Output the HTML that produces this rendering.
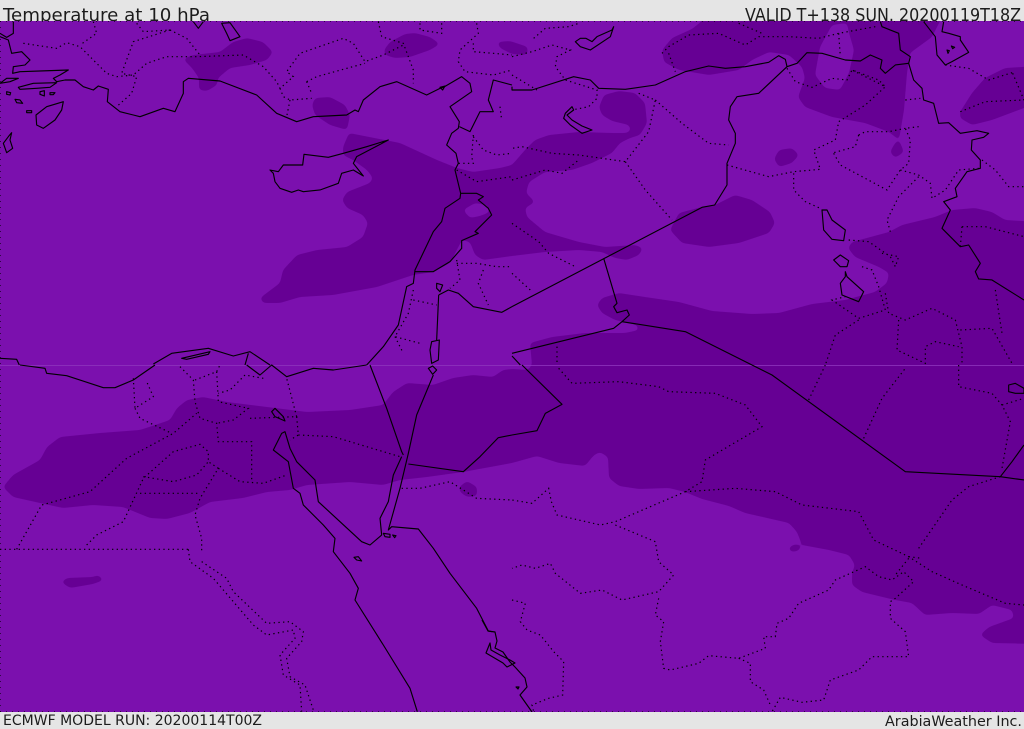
<!DOCTYPE html>
<html><head><meta charset="utf-8"><title>Temperature at 10 hPa</title>
<style>html,body{margin:0;padding:0;background:#e5e5e5}svg{display:block}
text{font-family:"DejaVu Sans","Liberation Sans",sans-serif;fill:#1c1c1c}
.s polyline,.s polygon{fill:none;stroke:#000;stroke-width:3.4;stroke-linejoin:round}
.d polyline{fill:none;stroke:#000;stroke-width:3.6;stroke-dasharray:4 10}
.e polyline{fill:none;stroke:#000;stroke-width:1;stroke-dasharray:1 5;opacity:.6}
.f polygon{fill:#660094}
.l polygon{fill:#7b10ae}
.t polyline,.t polygon{fill:none;stroke:#000;stroke-width:1.15;stroke-linejoin:round}
</style></head><body>
<svg width="1024" height="729" viewBox="0 0 1024 729" xmlns="http://www.w3.org/2000/svg">
<defs>
<filter id="sm" filterUnits="userSpaceOnUse" x="-60" y="-60" width="1150" height="850" color-interpolation-filters="sRGB">
<feGaussianBlur stdDeviation="2.2"/>
<feComponentTransfer><feFuncA type="linear" slope="10" intercept="-4.5"/></feComponentTransfer>
</filter>
</defs>
<rect width="1024" height="729" fill="#e5e5e5"/>
<text x="3" y="21" font-size="17.4" textLength="207" lengthAdjust="spacingAndGlyphs">Temperature at 10 hPa</text>
<text x="745" y="21" font-size="17.4" textLength="276" lengthAdjust="spacingAndGlyphs">VALID T+138 SUN. 20200119T18Z</text>
<text x="3" y="725" font-size="14" textLength="259" lengthAdjust="spacingAndGlyphs">ECMWF MODEL RUN: 20200114T00Z</text>
<text x="885" y="726" font-size="14" textLength="137" lengthAdjust="spacingAndGlyphs">ArabiaWeather Inc.</text>
<svg x="0" y="21" width="1024" height="691" viewBox="0 21 1024 691">
<rect x="0" y="21" width="1024" height="691" fill="#7b10ae"/>
<g class="f" filter="url(#sm)">
<polygon points="183,59 193,55 220,52 233,42 247,38 263,42 273,52 267,60 250,65 230,68 218,78 217,85 207,91 199,90 199,78 192,68"/>
<polygon points="384,50 390,42 405,34 415,33 430,37 440,44 430,50 410,57 395,58 385,55"/>
<polygon points="497,42 510,41 528,47 527,55 512,54 500,48"/>
<polygon points="312,105 315,98 330,97 345,105 350,115 347,130 330,125 315,115"/>
<polygon points="349,133 400,143 437,160 457,168 473,172 500,168 512,165 525,150 535,140 549,135 579,132 612,133 627,133 631,130 629,125 612,121 602,115 599,107 604,95 619,91 635,93 645,103 647,123 640,135 630,138 620,143 612,153 592,163 572,170 545,172 529,182 526,193 535,202 525,208 527,217 545,232 579,242 605,247 635,245 643,248 639,255 627,260 615,258 602,252 579,250 545,252 512,256 483,260 475,255 470,242 462,240 450,263 433,272 413,275 377,287 333,295 300,297 280,303 263,303 260,298 280,283 283,270 297,255 317,250 347,247 363,237 368,223 363,215 347,208 342,200 347,192 370,183 373,178 367,170 353,160 343,155 343,147"/>
<polygon points="704,10 702,21 692,29 672,38 662,50 664,62 679,70 709,75 739,70 752,60 769,52 789,55 802,67 805,78 798,97 805,107 832,117 865,123 889,132 899,140 895,143 890,152 895,158 904,152 899,140 904,110 907,73 910,53 932,37 940,21 945,10"/>
<polygon points="960,112 972,93 985,78 1005,68 1040,66 1040,102 992,120 972,125 960,118"/>
<polygon points="774,159 779,150 792,148 799,155 792,163 779,167"/>
<polygon points="670,230 679,213 702,207 715,205 735,195 752,200 770,212 775,223 769,233 739,243 709,247 682,243"/>
<polygon points="1040,222 1005,220 992,212 975,208 952,210 935,217 902,225 889,232 852,242 848,248 855,257 879,267 889,273 887,283 875,292 845,300 812,304 779,313 752,314 712,311 679,302 645,297 619,293 602,298 597,305 602,313 615,320 637,325 639,330 625,333 585,333 552,337 530,343 532,365 528,370 512,369 503,370 493,377 473,375 453,378 433,385 407,383 393,392 383,405 350,410 307,412 267,407 227,402 203,397 187,400 177,408 170,420 140,430 100,433 60,437 47,447 40,460 13,475 3,487 13,497 40,503 63,508 93,505 123,507 150,518 167,519 190,513 210,502 243,498 267,492 290,490 307,485 350,482 383,485 400,480 427,477 463,472 512,463 537,456 559,463 585,466 594,455 600,452 608,457 609,478 619,486 639,489 669,488 685,492 702,499 729,506 745,513 789,523 797,532 802,545 829,550 849,555 855,565 852,573 852,585 862,592 895,600 912,603 925,615 952,613 979,614 992,605 1012,610 1014,618 989,627 980,635 992,643 1040,644"/>
<polygon points="459,487 467,481 477,487 477,496 467,497 460,492"/>
<polygon points="61,582 67,578 93,577 98,575 104,580 93,584 70,588"/>
<polygon points="788,548 795,544 802,546 798,551 791,552"/>
</g>
<g class="l" filter="url(#sm)">
<polygon points="463,210 475,203 487,205 490,212 480,216 470,218"/>
<polygon points="832,25 847,23 849,33 854,50 849,73 840,90 825,88 815,75 820,47"/>
</g>
<rect x="0" y="365" width="1024" height="1" fill="#8f35bd" opacity=".8"/>

<!-- dotted borders -->
<g class="d">
<g transform="scale(.33333)">
<polyline points="70,130 170,145 200,128 240,140 320,220 350,230 400,225 440,190 500,170 590,170 730,165 790,200 830,245 840,265 880,230 860,215 900,160 1030,115 1060,130 1095,185 1150,165 1210,135"/>
<polyline points="280,65 290,100 240,135"/>
<polyline points="410,70 430,95 510,90 560,115 600,165"/>
<polyline points="510,90 400,125 365,220 410,230 395,280 350,320"/>
<polyline points="840,265 850,290 870,300 935,295"/>
<polyline points="870,300 860,350"/>
<polyline points="920,245 950,230 1095,190"/>
<polyline points="920,245 935,280"/>
<polyline points="1135,65 1145,110 1210,130 1240,210 1240,250"/>
<polyline points="1260,70 1260,90 1325,100 1325,65"/>
<polyline points="1430,70 1435,100 1380,150 1375,185 1395,215 1480,225 1536,210"/>
<polyline points="1420,130 1420,155 1480,160 1536,165"/>
<polyline points="1420,405 1415,470 1420,490 1370,490"/>
<polyline points="1420,410 1450,450 1490,465 1536,460"/>
<polyline points="1500,320 1505,360"/>
<polyline points="1370,510 1430,545 1536,530"/>
<polyline points="1370,780 1380,840 1350,865"/>
<polyline points="1370,790 1430,790 1490,800 1536,800"/>
<polyline points="1450,810 1435,850 1465,915"/>
<polyline points="1240,870 1225,940 1185,1010 1260,1030"/>
<polyline points="1240,900 1310,915"/>
<polyline points="1185,1010 1210,1060"/>
</g>
<g transform="translate(512,0) scale(.33333)">
<polyline points="65,115 100,85 170,80 200,70"/>
<polyline points="0,170 60,155 120,135 175,150 135,170 130,200 160,240 255,270 255,295 230,320 180,330"/>
<polyline points="380,280 430,300 410,395 340,485 200,465 120,460 30,440 0,445"/>
<polyline points="430,300 510,370 590,430 650,435"/>
<polyline points="340,485 400,570 480,660"/>
<polyline points="645,495 770,530 845,515 925,508 905,450 970,420 980,365 1060,315 1120,260 1020,210"/>
<polyline points="845,520 845,570 880,605 925,625"/>
<polyline points="450,160 470,140 530,105 620,100 700,135 740,110 830,110 920,115 980,100 1090,80"/>
<polyline points="470,160 490,215"/>
<polyline points="680,70 750,100"/>
<polyline points="825,205 850,245 900,262 960,235 1005,240 1020,210 1100,240 1120,260"/>
<polyline points="980,100 985,170"/>
<polyline points="965,460 985,495 1125,570 1165,510 1190,490 1195,420 1180,385 1220,380"/>
<polyline points="1040,405 1060,395 1130,395 1180,385"/>
<polyline points="1040,405 1030,440 965,458"/>
<polyline points="1165,510 1220,525 1255,550 1260,595 1300,570 1340,510 1400,505"/>
<polyline points="1220,530 1160,590 1125,660 1135,695"/>
<polyline points="1410,480 1450,510 1490,560 1536,560"/>
<polyline points="1300,195 1370,205 1430,240 1510,215"/>
<polyline points="1180,300 1225,295"/>
<polyline points="1345,335 1420,305 1536,300 1500,215"/>
<polyline points="1350,680 1420,680 1536,710"/>
<polyline points="1350,680 1345,740"/>
<polyline points="1010,720 1070,725 1135,770 1150,800 1160,770 1110,760"/>
<polyline points="1050,800 1080,810 1100,860 1120,930 1040,955 960,900 1000,890"/>
<polyline points="1120,880 1130,940 1180,960 1260,925 1330,960 1350,1040 1350,1095"/>
<polyline points="1160,960 1155,1050 1240,1090 1240,1040 1270,1025 1340,1040"/>
<polyline points="1040,960 970,1005 940,1095"/>
<polyline points="1345,990 1440,985 1500,1090"/>
<polyline points="1450,870 1470,1000"/>
<polyline points="0,670 80,725 110,760 190,800"/>
<polyline points="0,820 55,870"/>
<polyline points="135,1040 135,1095"/>
<polyline points="0,225 75,270"/>
<polyline points="0,540 100,510 150,520 200,480"/>
</g>
<g transform="translate(0,365) scale(.33333)">
<polyline points="0,553 565,553"/>
<polyline points="50,553 125,420 270,380 380,280 520,205 590,145"/>
<polyline points="400,40 405,130 460,95 440,50"/>
<polyline points="405,130 420,160 515,205"/>
<polyline points="540,5 580,45 585,110 600,160 650,175 655,230 755,230 755,350"/>
<polyline points="585,45 650,20 660,0"/>
<polyline points="650,20 655,110 745,130 700,165 650,175"/>
<polyline points="790,40 735,30 690,75 655,85"/>
<polyline points="750,160 890,155 860,40"/>
<polyline points="890,155 895,210 870,225"/>
<polyline points="895,210 1000,215 1200,275"/>
<polyline points="260,540 290,510 370,470 430,340 520,260 600,238 625,260 625,290 655,310 600,400 585,450 605,520 605,560"/>
<polyline points="430,335 520,350 590,330 625,290"/>
<polyline points="420,385 595,385"/>
<polyline points="655,310 720,350 790,355 860,330"/>
<polyline points="565,553 570,590 640,640 760,780 800,810 880,795 885,820 840,870 850,930 900,960 905,1040"/>
<polyline points="605,590 680,640 700,680 800,775 870,770 910,800 905,830 860,880 870,935 915,960 940,1035"/>
<polyline points="1205,370 1260,370 1350,350 1430,400 1536,405"/>
</g>
<g transform="translate(512,365) scale(.33333)">
<polyline points="140,10 180,55 320,50 440,65 470,80 610,85 700,120 750,185 580,285 570,350 520,380 310,470 265,480 135,450 118,410 110,370 60,415 0,405"/>
<polyline points="310,480 430,530 440,590 485,630 440,680 330,705 270,675 205,685 130,625 115,595 70,610 30,600 0,610"/>
<polyline points="440,700 430,750 455,770 445,830 455,910 475,915 560,895 590,872 680,880 760,850 755,815 790,815 795,775 830,760 860,715 950,675 970,645 1060,605 1100,635 1140,645 1175,620 1205,650 1150,700 1135,710 1135,760 1180,800 1190,875 1080,875 1040,915 955,945 935,1005 870,1012 805,997 780,1040"/>
<polyline points="680,880 715,895 715,950 755,975 775,1020"/>
<polyline points="520,380 670,370 790,380 870,420 1040,440 1085,525 1190,575 1260,620 1350,660 1480,715 1536,720"/>
<polyline points="1190,575 1230,580"/>
<polyline points="1220,550 1320,405 1370,365 1465,335"/>
<polyline points="1190,580 1150,630"/>
<polyline points="890,105 940,0"/>
<polyline points="1055,220 1110,100 1180,10"/>
<polyline points="1340,0 1340,65 1440,85 1470,120 1495,170 1470,310"/>
<polyline points="1470,120 1536,100"/>
<polyline points="0,705 40,715 25,770 45,795 85,810 125,860 155,890 152,990 110,1000 60,1020 65,1040"/>
</g>
</g>
<g class="e">
<polyline points="0,21.5 1024,21.5"/>
<polyline points="0,711.5 1024,711.5"/>
<polyline points="0.5,21 0.5,712"/>
</g>

<!-- solid lines -->
<g class="s">
<g transform="scale(.33333)">
<polyline points="40,65 40,100 20,112 0,100"/>
<polyline points="0,110 25,120 35,160 65,155 90,180 75,195 40,200 38,220 60,215 205,210 180,225 160,235 170,245 195,240 225,240 250,260 280,270 295,258 325,268 322,305 360,335 400,345 420,350 490,325 525,335 550,280 550,245 565,235 660,243 770,285 830,340 890,365 940,350 1040,345 1065,330 1075,335 1090,300 1140,260 1190,245 1280,285 1320,265 1330,262 1385,230 1410,250 1415,275 1350,320 1378,365 1375,385 1355,400 1340,435 1368,460 1375,490 1365,510 1382,580 1380,595 1335,625 1325,665 1300,695 1245,810 1240,850 1220,860 1195,975 1150,1040 1100,1095"/>
<polyline points="1378,380 1410,395 1440,335 1480,335 1465,300 1480,240 1536,255"/>
<polyline points="1382,580 1430,580 1450,590 1435,600 1465,625 1475,645 1425,695 1435,700 1385,722 1385,745 1350,785 1300,815 1245,815"/>
<polygon points="810,510 820,520 825,545 840,565 875,577 895,570 910,575 960,570 1015,550 1025,520 1060,510 1090,528 1060,490 1070,470 1165,420 1100,440 1030,460 985,472 912,463 908,495 850,495 835,515"/>
<polygon points="190,305 185,330 165,360 130,385 110,375 108,345 140,320"/>
<polygon points="35,398 30,420 38,445 20,458 10,430 25,410"/>
<polygon points="665,70 690,68 720,110 690,122 680,100"/>
<polyline points="580,65 595,85 610,65"/>
<polygon points="0,250 20,235 55,235 30,245"/>
<polygon points="55,262 100,250 170,248 150,262 110,265 60,268"/>
<polygon points="120,275 133,272 133,288 120,283"/>
<polygon points="20,275 32,278 30,285 20,283"/>
<polygon points="45,298 60,300 68,310 50,308"/>
<polygon points="80,332 95,332 95,338 80,338"/>
<polygon points="150,278 165,278 160,284 150,284"/>
<polygon points="1295,1025 1318,1020 1315,1080 1295,1090 1290,1050"/>
<polygon points="1310,850 1328,855 1320,875 1310,865"/>
<polyline points="1316,885 1345,870 1375,880 1420,920 1505,937 1536,920"/>
<polyline points="1316,885 1310,1020"/>
<polyline points="460,1092 515,1060 625,1045 700,1068 750,1055 810,1095"/>
<polyline points="0,1075 50,1078 58,1095"/>
<polygon points="545,1075 630,1055 625,1063 560,1078"/>
<polyline points="745,1060 735,1095"/>
<polygon points="1320,262 1335,258 1328,270"/>
</g>
<g transform="translate(512,0) scale(.33333)">
<polyline points="0,260 0,270 60,270 185,230 235,240 260,265 340,268 430,255 520,215 590,198 640,205 700,200 770,187 800,167 820,178 825,200 855,190 885,158 930,160 1000,180 1045,183 1075,165 1110,180 1105,205 1120,220 1150,195 1190,190 1205,240 1230,265 1235,300 1265,310 1280,370 1310,368 1345,400 1395,392 1430,400 1415,412 1380,420 1378,450 1405,480 1405,505 1365,515 1330,565 1335,590 1295,605 1315,630 1290,685 1345,740 1370,735 1405,790 1390,815 1400,837 1440,840 1536,900"/>
<polyline points="1105,65 1110,80 1160,100 1165,150 1195,170 1190,190"/>
<polyline points="1235,65 1270,110 1275,165 1300,195 1320,185 1370,157 1345,120 1345,110 1310,100 1290,95 1295,65"/>
<polyline points="825,200 740,280 675,290 655,320 650,360 670,400 670,430 645,490 645,555 608,615 570,622 0,920"/>
<polyline points="275,775 315,910 305,920 315,938 345,930 352,945 330,965 305,985 0,1060"/>
<polyline points="330,965 520,995 720,1095"/>
<polyline points="0,1068 25,1095"/>
<polygon points="190,125 205,115 222,115 240,125 255,110 300,90 305,80 295,110 235,150 205,140"/>
<polygon points="180,320 160,340 155,355 175,375 210,400 240,390 210,378 180,360 165,345 185,330"/>
<polygon points="930,630 945,630 960,660 1000,690 995,722 960,718 935,690"/>
<polygon points="965,780 985,765 1010,782 1005,800 985,800"/>
<polygon points="1000,815 1005,830 1055,875 1040,905 990,885 985,850 1000,830"/>
<polygon points="1305,150 1312,152 1308,160"/>
<polygon points="1318,138 1328,142 1322,146"/>
</g>
<g transform="translate(0,365) scale(.33333)">
<polyline points="60,0 135,10 140,25 200,32 310,68 345,68 400,45 465,0"/>
<polyline points="740,0 780,30 815,0 860,35 940,10 1000,15 1100,0"/>
<polyline points="1110,0 1160,130 1205,260 1210,270"/>
<polyline points="1225,297 1390,320 1440,275 1495,218 1536,210"/>
<polyline points="1300,30 1250,150 1225,265 1200,370 1165,495 1175,485 1255,492 1300,550 1350,625 1430,730 1465,798 1475,800"/>
<polyline points="1205,275 1180,330 1165,410 1140,460 1145,510 1110,540 1085,530 1020,470 955,410 945,345 890,290 870,250 855,200 845,205 820,255 865,290 880,370 900,385 910,420 970,480 1005,520 1000,560 1050,625 1075,670 1065,705 1150,840 1230,970 1252,1040"/>
<polygon points="815,140 825,130 850,155 855,168 825,155"/>
<polygon points="1285,10 1298,3 1310,15 1298,28"/>
<polygon points="1150,505 1170,508 1170,517 1155,515"/>
<polygon points="1178,510 1188,512 1184,518"/>
<polygon points="1062,577 1075,575 1085,588 1070,585"/>
</g>
<g transform="translate(512,365) scale(.33333)">
<polyline points="30,0 150,118 100,145 75,197 0,210"/>
<polyline points="720,0 780,30 1180,320 1465,335 1536,345"/>
<polyline points="1465,335 1500,290 1536,240"/>
<polygon points="1490,60 1510,55 1536,70 1536,85 1510,85 1490,80"/>
</g>
</g>
<g class="t">
<polyline points="482,620 488,631 495,632 497,641 495,648 503,652 510,662 515,667 525,678 527,687 520,695 532,712"/>
<polygon points="490,643 486,653 503,663 507,667 515,663 510,660 500,655 491,650"/>
<polygon points="516,687 519,687 518,689"/>
</g>
</svg>
</svg>
</body></html>
